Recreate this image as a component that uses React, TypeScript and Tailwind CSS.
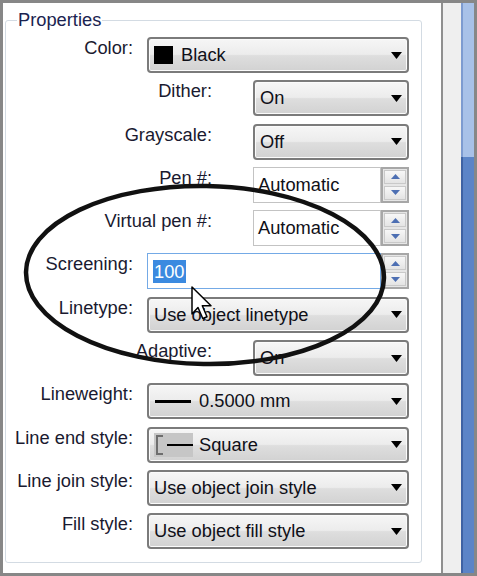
import React from "react";

type Row =
  | { label: string; wide: boolean; kind: "select"; value: React.ReactNode }
  | { label: string; wide: boolean; kind: "spin"; value: string; focused?: boolean };

const ddBg =
  "bg-[linear-gradient(to_bottom,#f6f6f6_0%,#ececec_48%,#dedede_52%,#d2d2d2_100%)]";

function Arrow() {
  return (
    <svg width="11" height="7" viewBox="0 0 11 7" className="shrink-0">
      <path d="M0 0 H11 L5.5 7 Z" fill="#000" />
    </svg>
  );
}

function SpinTri({ up }: { up: boolean }) {
  return (
    <svg width="9" height="5" viewBox="0 0 9 5">
      <path d={up ? "M0 5 H9 L4.5 0 Z" : "M0 0 H9 L4.5 5 Z"} fill="#4d6fb3" />
    </svg>
  );
}

function Select({ children }: { children: React.ReactNode }) {
  return (
    <div
      className={`flex h-full items-center rounded-[4px] border-2 border-[#7b7b7b] pl-[5px] pr-[5px] shadow-[inset_0_0_0_1px_#fbfbfb] ${ddBg}`}
    >
      <div className="flex flex-1 items-center text-[#101018]">{children}</div>
      <Arrow />
    </div>
  );
}

function Spinner({ value, focused }: { value: string; focused?: boolean }) {
  return (
    <div className="flex h-full">
      <div
        className={
          focused
            ? "flex flex-1 items-center border border-[#74aae6] bg-white pl-[5px]"
            : "flex flex-1 items-center border border-[#c3c3c3] bg-white pl-[4px] text-[#101018]"
        }
      >
        {focused ? (
          <span className="bg-[#3b8ae0] px-[1px] leading-[23px] text-white">{value}</span>
        ) : (
          value
        )}
      </div>
      <div className="flex w-[28px] flex-col gap-[2px] border-2 border-[#a7a7a7] bg-[#e6e6e6] p-[1px]">
        <div className="flex flex-1 items-center justify-center border border-[#c9c9c9] bg-[linear-gradient(to_bottom,#f7f7f7,#e4e4e4)]">
          <SpinTri up />
        </div>
        <div className="flex flex-1 items-center justify-center border border-[#c9c9c9] bg-[linear-gradient(to_bottom,#f7f7f7,#e4e4e4)]">
          <SpinTri up={false} />
        </div>
      </div>
    </div>
  );
}

const rows: Row[] = [
  {
    label: "Color:",
    wide: true,
    kind: "select",
    value: (
      <>
        <span className="mr-[8px] h-[18px] w-[19px] bg-black" />
        Black
      </>
    ),
  },
  { label: "Dither:", wide: false, kind: "select", value: "On" },
  { label: "Grayscale:", wide: false, kind: "select", value: "Off" },
  { label: "Pen #:", wide: false, kind: "spin", value: "Automatic" },
  { label: "Virtual pen #:", wide: false, kind: "spin", value: "Automatic" },
  { label: "Screening:", wide: true, kind: "spin", value: "100", focused: true },
  { label: "Linetype:", wide: true, kind: "select", value: "Use object linetype" },
  { label: "Adaptive:", wide: false, kind: "select", value: "On" },
  {
    label: "Lineweight:",
    wide: true,
    kind: "select",
    value: (
      <>
        <span className="ml-[1px] mr-[8px] h-[3px] w-[36px] bg-black" />
        0.5000 mm
      </>
    ),
  },
  {
    label: "Line end style:",
    wide: true,
    kind: "select",
    value: (
      <>
        <span className="mr-[6px] flex h-[24px] w-[39px] items-center bg-[#c6c6c6] pl-[2px]">
          <span className="h-[20px] w-[7px] border-y-2 border-l-2 border-[#6e6e6e]" />
          <span className="ml-[4px] h-[2px] flex-1 bg-black" />
        </span>
        Square
      </>
    ),
  },
  { label: "Line join style:", wide: true, kind: "select", value: "Use object join style" },
  { label: "Fill style:", wide: true, kind: "select", value: "Use object fill style" },
];

export default function App() {
  return (
    <div className="relative flex h-[576px] w-[477px] overflow-hidden border-[3px] border-[#878787] bg-white font-['Liberation_Sans',Arial,sans-serif] text-[18.3px] leading-[18px]">
      <div className="h-full w-[438px] pl-[2px] pt-[17px]">
        <div className="relative h-[543px] w-[417px] rounded-[3px] border border-[#d3dbe3] pt-[16px]">
          <div className="absolute left-[11px] top-[-11px] bg-white px-[1px] leading-[20px] text-[#1b2350]">
            Properties
          </div>
          <div className="flex flex-col gap-[7.3px]">
            {rows.map((r) => (
              <div key={r.label} className="flex h-[36px]">
                <div
                  className={
                    r.wide
                      ? "w-[127px] shrink-0 pt-[2px] text-right text-[#1a1a30]"
                      : "w-[206px] shrink-0 pt-[2px] text-right text-[#1a1a30]"
                  }
                >
                  {r.label}
                </div>
                <div className={r.wide ? "ml-[14px] w-[262px]" : "ml-[41px] w-[156px]"}>
                  {r.kind === "select" ? (
                    <Select>{r.value}</Select>
                  ) : (
                    <Spinner value={r.value} focused={r.focused} />
                  )}
                </div>
              </div>
            ))}
          </div>
        </div>
      </div>
      <div className="h-full w-[2px] bg-[#8f8f8f]" />
      <div className="h-full w-[18px] bg-[#efefef]" />
      <div className="flex h-full w-[13px] flex-col">
        <div className="h-[154px] border-l-2 border-[#7d9bd0] bg-[#a8c1e8]" />
        <div className="flex-1 border-l-2 border-[#3e62a3] bg-[#5b84c7]" />
      </div>

      <svg
        width="477"
        height="576"
        viewBox="0 0 477 576"
        className="pointer-events-none absolute left-[-3px] top-[-3px]"
      >
        <ellipse
          cx="205"
          cy="275"
          rx="179"
          ry="89"
          transform="rotate(1 205 275)"
          fill="none"
          stroke="#111"
          strokeWidth="4.5"
        />
        <path
          d="M192 287 L192 314 L198 307.5 L202.8 318.5 L207 316.7 L202.3 305.8 L211 305.8 Z"
          fill="#fff"
          stroke="#000"
          strokeWidth="1.5"
          strokeLinejoin="round"
        />
      </svg>
    </div>
  );
}
